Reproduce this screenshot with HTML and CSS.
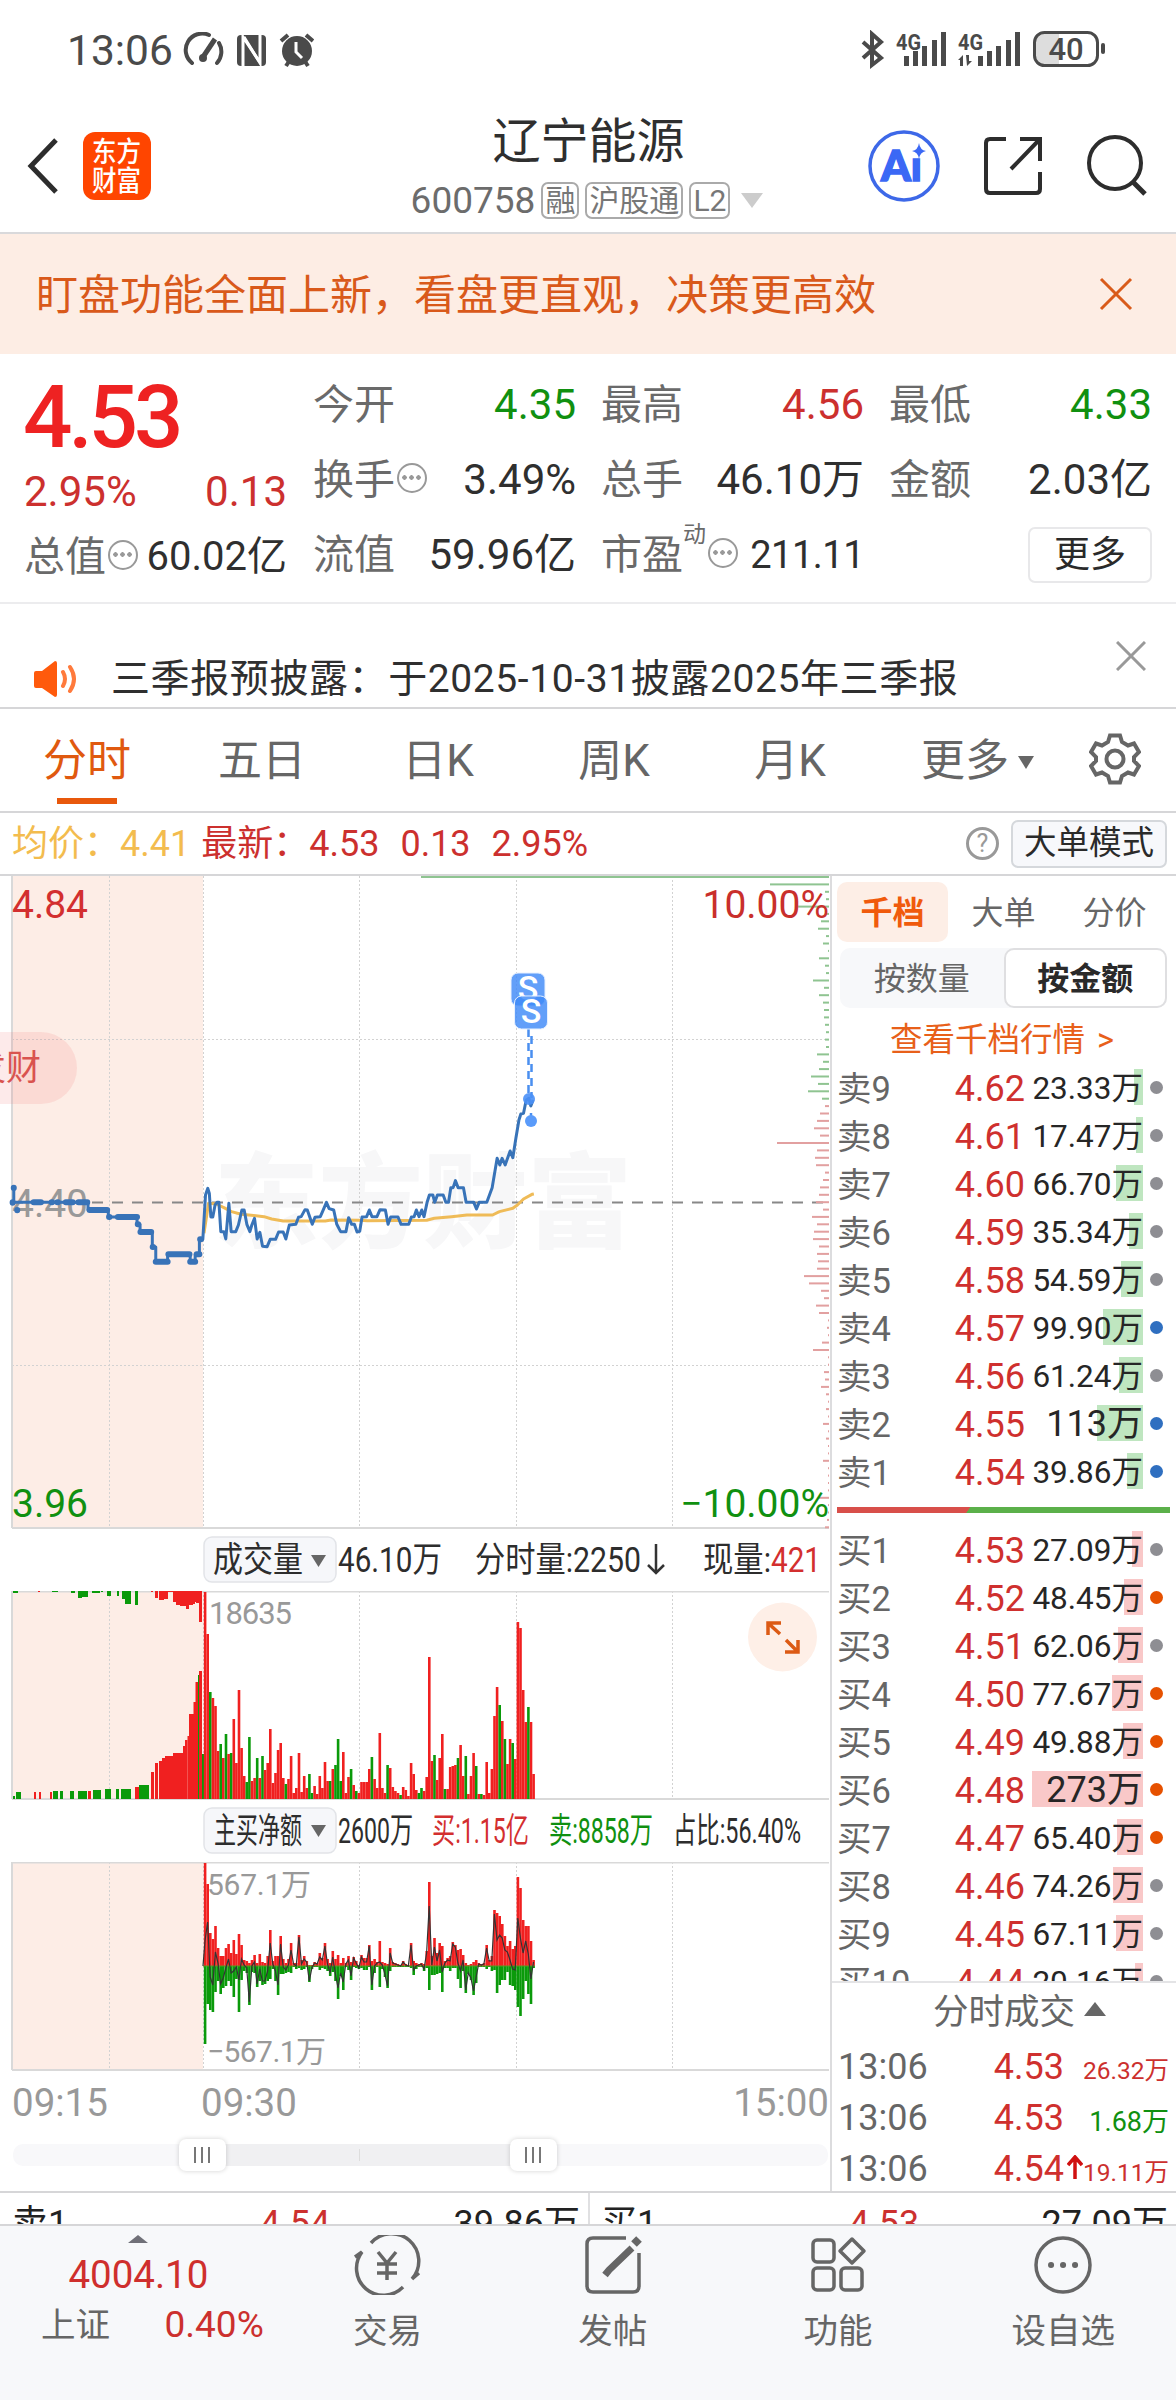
FILE: index.html
```html
<!DOCTYPE html>
<html lang="zh-CN">
<head>
    <meta charset="UTF-8">
    <title>辽宁能源 600758</title>
    <link rel="stylesheet" href="styles.css">
</head>
<body>
    <div class="statusbar">
        <span class="clock">13:06</span>
        <svg class="st-left" width="132" height="36" viewBox="0 0 132 36" fill="none" stroke="#4a4a4a" stroke-width="4">
            <path d="M10 31A16.500 16.500 0 0 1 27 3M37 11A17 17 0 0 1 35 31" stroke-linecap="round"/>
            <path d="M21 25L33 7" stroke-width="5"/>
            <circle cx="21" cy="26" r="4" fill="#4a4a4a" stroke="none"/>
            <rect x="55" y="3" width="29" height="31" rx="4" fill="#4a4a4a" stroke="none"/>
            <path d="M61 34V5L77 29" stroke="#fff" stroke-width="3"/>
            <path d="M62 5L78 31V3" stroke="#fff" stroke-width="3"/>
            <circle cx="115" cy="19" r="15" fill="#4a4a4a" stroke="none"/>
            <path d="M99 9L106 3M131 9L124 3M104 34L108 28M126 34L122 28"/>
            <path d="M114 10V20L120 26" stroke="#fff" stroke-width="3"/>
        </svg>
        <svg class="st-right" width="248" height="40" viewBox="0 0 248 40">
            <path d="M4 12L22 28L13 35V4L22 12L4 28" fill="none" stroke="#4a4a4a" stroke-width="4"/>
            <g fill="#4a4a4a">
                <text x="37" y="20" font-size="22" font-weight="700" textLength="25" lengthAdjust="spacingAndGlyphs">4G</text>
                <text x="99" y="20" font-size="22" font-weight="700" textLength="25" lengthAdjust="spacingAndGlyphs">4G</text>
                <rect x="45" y="26" width="5" height="10"/><rect x="54" y="21" width="5" height="15"/><rect x="63" y="16" width="5" height="20"/><rect x="73" y="10" width="5" height="26"/><rect x="82" y="2" width="5" height="34"/>
                <rect x="119" y="26" width="5" height="10"/><rect x="128" y="21" width="5" height="15"/><rect x="137" y="16" width="5" height="20"/><rect x="147" y="10" width="5" height="26"/><rect x="156" y="2" width="5" height="34"/>
                <path d="M99 30L104 25V36H101V30zM107 25H110V31H113L108 36z"/>
                <rect x="242" y="13" width="4" height="11" rx="2"/>
            </g>
            <path d="M184 3H200V35H184Q176 35 176 26V12Q176 3 184 3z" fill="#ddd"/>
            <rect x="175.500" y="2.500" width="63" height="33" rx="10" fill="none" stroke="#4a4a4a" stroke-width="3"/>
            <text x="207" y="30" font-size="31" font-weight="500" text-anchor="middle" fill="#4a4a4a">40</text>
        </svg>
    </div>

    <header class="topbar">
        <svg class="back" width="34" height="58" viewBox="0 0 34 58"><path d="M30 3L5 29L30 55" fill="none" stroke="#2d2d2d" stroke-width="5"/></svg>
        <svg class="logo" width="68" height="68" viewBox="0 0 68 68">
            <rect width="68" height="68" rx="12" fill="#ff4500"/>
            <g fill="#fff" font-size="28" font-weight="500"><text x="9" y="30" textLength="49" lengthAdjust="spacingAndGlyphs">东方</text><text x="9" y="59" textLength="49" lengthAdjust="spacingAndGlyphs">财富</text></g>
        </svg>
        <div class="title">
            <h1>辽宁能源</h1>
            <div class="code">600758<i>融</i><i>沪股通</i><i>L2</i><b></b></div>
        </div>
        <svg class="tools" width="284" height="76" viewBox="0 0 284 76" fill="none" stroke="#2d2d2d" stroke-width="4">
            <circle cx="38" cy="38" r="34" stroke="#3d68e8" stroke-width="3.500"/>
            <text x="15" y="53" font-size="42" font-weight="900" fill="#3b68f5" stroke="#3b68f5" stroke-width="1.500" textLength="41" lengthAdjust="spacingAndGlyphs">Aı</text>
            <path d="M53 15Q54 22 60 23Q54 24 53 31Q52 24 46 23Q52 22 53 15z" fill="#3b68f5" stroke="none"/>
            <path d="M140 11H124Q120 11 120 15V61Q120 65 124 65H170Q174 65 174 61V44M154 11H174V33M174 11L145 41"/>
            <circle cx="249" cy="35" r="26"/>
            <path d="M267 54L279 66" stroke-width="5"/>
        </svg>
    </header>

    <div class="banner">
        <span>盯盘功能全面上新，看盘更直观，决策更高效</span>
        <svg width="34" height="34" viewBox="0 0 34 34"><path d="M2 2L32 32M32 2L2 32" stroke="#d95b1a" stroke-width="3"/></svg>
    </div>

    <section class="quote">
        <div class="now">
            <div class="price">4.53</div>
            <div class="pair red"><span>2.95%</span><span>0.13</span></div>
            <div class="pair cell"><label>总值<em class="more"></em></label><span class="tight">60.02亿</span></div>
        </div>
        <div class="cells">
            <div class="cell"><label>今开</label><span class="green">4.35</span></div>
            <div class="cell"><label>最高</label><span class="red">4.56</span></div>
            <div class="cell"><label>最低</label><span class="green">4.33</span></div>
            <div class="cell"><label>换手<em class="more"></em></label><span>3.49%</span></div>
            <div class="cell"><label>总手</label><span>46.10万</span></div>
            <div class="cell"><label>金额</label><span>2.03亿</span></div>
            <div class="cell"><label>流值</label><span>59.96亿</span></div>
            <div class="cell"><label>市盈<sup>动</sup><em class="more"></em></label><span class="pe">211.11</span></div>
            <div class="cell end"><button class="btn-more">更多</button></div>
        </div>
    </section>

    <div class="notice">
        <svg width="46" height="38" viewBox="0 0 46 38"><path d="M1 13Q1 11 3 11H9L22 1Q24 1 24 3V35Q24 37 22 37L9 28H3Q1 28 1 26z" fill="#ff5a0c"/><path d="M30 12Q34 19 30 26M37 7Q45 19 37 31" fill="none" stroke="#ff7a3c" stroke-width="4" stroke-linecap="round"/></svg>
        <p>三季报预披露：于2025-10-31披露2025年三季报</p>
        <svg class="x" width="30" height="30" viewBox="0 0 30 30"><path d="M1 1L29 29M29 1L1 29" stroke="#999" stroke-width="3"/></svg>
    </div>

    <nav class="tabs">
        <a class="active">分时</a><a>五日</a><a>日K</a><a>周K</a><a>月K</a><a class="drop">更多<b></b></a>
        <svg width="52" height="52" viewBox="0 0 52 52" fill="none" stroke="#666" stroke-width="4"><path d="M21 2.500H31L33 9L39 12.500L45 10.500L50 19L45 24V28L50 33L45 41.500L39 39.500L33 43L31 49.500H21L19 43L13 39.500L7 41.500L2 33L7 28V24L2 19L7 10.500L13 12.500L19 9z"/><circle cx="26" cy="26" r="8.500"/></svg>
    </nav>

    <div class="avg">
        <span class="yellow">均价：4.41</span>
        <span class="red latest">最新：4.53</span>
        <span class="red">0.13</span>
        <span class="red">2.95%</span>
        <i class="help">?</i>
        <button>大单模式</button>
    </div>

    <main class="main">
        <div class="charts">
            <svg class="chart" width="830" height="653" viewBox="0 0 830 653">
                <rect x="12" y="0" width="191" height="652" fill="#fdede6"/>
                <text x="214" y="364" class="mark" textLength="418" lengthAdjust="spacingAndGlyphs">东方财富</text>
                <g class="grid"><path d="M109.500 0V652M203.500 0V652M359.500 0V652M516.500 0V652M672.500 0V652M12 163.500H829M12 489.500H829"/></g>
                <path d="M12 0V652M12 652H829" class="frame"/>
                <path d="M12 326.500H829" stroke="#888" stroke-width="2" stroke-dasharray="11 9"/>
                <g id="depth"></g>
                <text x="12" y="341" font-size="39" fill="#999">4.40</text>
                <g transform="translate(0 184) scale(.3827 .3333)" fill="none" stroke-linejoin="round">
                    <polyline class="line avgline" points="533,520 545,430 565,432 585,443 605,455 630,463 650,465 690,470 710,477 740,483 850,483 865,480 940,481 960,482 1115,481 1135,475 1180,470 1220,465 1287,465 1305,455 1340,445 1352,435 1368,417 1390,403 1395,402"/>
                    <polyline class="line" points="36,383 36,427 230,427 230,449 283,449 283,471 358,471 358,493 366,493 366,515 398,515 398,561 407,561 407,605 438,605 438,583 497,583 497,605 510,605 510,583 521,583 521,538 530,538 537,405 543,385 547,400 551,471 556,471 562,435 567,427 572,427 577,515 585,515 590,537 598,430 604,515 616,515 623,495 632,450 638,450 645,493 653,515 658,495 665,475 672,537 679,517 686,559 698,560 706,538 720,538 728,516 740,516 747,537 756,495 773,493 780,472 787,470 797,449 803,450 816,493 823,472 837,470 845,449 853,427 860,446 872,450 880,493 890,515 904,515 911,473 919,493 926,493 933,516 940,514 946,471 958,470 965,450 972,470 985,470 993,449 1007,450 1014,493 1021,471 1040,471 1048,493 1068,493 1075,471 1082,470 1088,450 1095,470 1102,450 1108,470 1116,427 1122,405 1131,405 1136,427 1143,405 1158,405 1165,427 1172,427 1178,383 1184,383 1190,362 1197,383 1211,383 1218,427 1238,427 1245,447 1252,427 1272,427 1286,383 1299,295 1306,315 1312,295 1320,315 1333,273 1340,293 1348,235 1356,180 1361,162 1368,160 1375,120 1382,115 1387,138 1393,120"/>
                    <path class="line dots" d="M36 383v1M33 427v1M45 450v1M88 427H107M135 427h1M150 427h1M172 427H190M205 427H228M234 450H280M285 471h1M308 471H358M360 493h1M367 516H395M399 561h1M407 605H438M440 583H495M497 605H510M514 583h7M523 538h2"/>
                </g>
                <g stroke="#4a8ff0" stroke-width="2.500"><path d="M528.500 153V222" stroke-dasharray="8 6"/><path d="M531.500 160V222" stroke-dasharray="8 6"/><path d="M531 237V245"/></g>
                <circle cx="529" cy="223" r="6" fill="#4a90f7" opacity=".9"/><circle cx="531" cy="245" r="6" fill="#5a9bfa"/>
                <rect x="511" y="97" width="34" height="33" rx="7" class="sell"/><text x="528" y="124" class="s">S</text>
                <rect x="514.500" y="120" width="33" height="33" rx="7" class="sell"/><text x="531" y="147" class="s">S</text>
                <g font-size="39">
                    <text x="12" y="42" fill="#d32f2f">4.84</text><text x="829" y="42" text-anchor="end" fill="#c92f2c">10.00%</text>
                    <text x="12" y="641" fill="#109010">3.96</text><text x="829" y="641" fill="#109010" text-anchor="end">−10.00%</text>
                </g>
                <path d="M0 156H41A36 36 0 0 1 41 228H0z" fill="#f05a5a" opacity=".13"/>
                <text x="-29" y="204" font-size="35" fill="#d9534f">发财</text>
            </svg>
            <svg class="chart bar-head" width="830" height="62" viewBox="0 0 830 62">
                <rect x="204" y="8" width="132" height="45" rx="8" class="pill"/>
                <g font-size="35" fill="#2d2d2d">
                    <text x="213" y="43" textLength="90" lengthAdjust="spacingAndGlyphs">成交量</text>
                    <path d="M311 26H326L318.500 38z" fill="#666"/>
                    <text x="338" y="43" textLength="104" lengthAdjust="spacingAndGlyphs">46.10万</text>
                    <text x="475" y="43" textLength="166" lengthAdjust="spacingAndGlyphs">分时量:2250</text>
                    <path d="M656 15V44M648 36L656 44L664 36" fill="none" stroke="#333" stroke-width="2.500"/>
                    <text x="703" y="43" textLength="68" lengthAdjust="spacingAndGlyphs">现量:</text>
                    <text x="771" y="43" textLength="50" lengthAdjust="spacingAndGlyphs" fill="#d32f2f">421</text>
                </g>
            </svg>
            <svg class="chart" width="830" height="209" viewBox="0 0 830 209">
                <rect x="12" y="0" width="191" height="208" fill="#fdede6"/>
                <g class="grid"><path d="M109.500 0V208M203.500 0V208M359.500 0V208M516.500 0V208M672.500 0V208"/></g>
                <path d="M12 208V.5H829M12 208H829" class="frame"/>
                <g id="pre"></g>
                <g id="volume"></g>
                <text x="209" y="33" font-size="31" fill="#999" textLength="83">18635</text>
                <circle cx="782.500" cy="46" r="34.500" fill="#feefe7"/>
                <path d="M768 44V32H781M768 32L780 43M798 49V61H785M798 61L786 49" fill="none" stroke="#dc5a14" stroke-width="3.500"/>
            </svg>
            <svg class="chart bar-head" width="830" height="62" viewBox="0 0 830 62">
                <rect x="204" y="8" width="132" height="45" rx="8" class="pill"/>
                <g font-size="35" fill="#2d2d2d">
                    <text x="214" y="43" textLength="88" lengthAdjust="spacingAndGlyphs">主买净额</text>
                    <path d="M311 25H326L318.500 37z" fill="#666"/>
                    <text x="338" y="43" textLength="75" lengthAdjust="spacingAndGlyphs">2600万</text>
                    <text x="432" y="43" textLength="97" lengthAdjust="spacingAndGlyphs" fill="#d32f2f">买:1.15亿</text>
                    <text x="549" y="43" textLength="104" lengthAdjust="spacingAndGlyphs" fill="#109010">卖:8858万</text>
                    <text x="673" y="43" textLength="128" lengthAdjust="spacingAndGlyphs">占比:56.40%</text>
                </g>
            </svg>
            <svg class="chart" width="830" height="209" viewBox="0 0 830 209">
                <rect x="12" y="0" width="191" height="208" fill="#fdede6"/>
                <g class="grid"><path d="M109.500 0V208M203.500 0V208M359.500 0V208M516.500 0V208M672.500 0V208"/></g>
                <path d="M12 208V.5H829M12 208H829" class="frame"/>
                <g id="net"></g>
                <g font-size="30" fill="#999"><text x="207" y="33" textLength="104">567.1万</text><text x="207" y="200" textLength="119">−567.1万</text></g>
            </svg>
            <div class="times"><span>09:15</span><span>09:30</span><span>15:00</span></div>
            <div class="slider">
                <div class="range"></div>
                <i class="knob k1"></i><i class="knob k2"></i>
            </div>
        </div>

        <aside class="book">
            <div class="book-tabs"><a class="active">千档</a><a>大单</a><a>分价</a></div>
            <div class="seg"><a>按数量</a><a class="active">按金额</a></div>
            <div class="link">查看千档行情 &gt;</div>
            <div id="asks"></div>
            <div class="ratio"></div>
            <div id="bids" class="bids"></div>
            <div class="deal-head">分时成交<b></b></div>
            <div class="deal"><span>13:06</span><span class="p">4.53</span><span class="a red">26.32万</span></div>
            <div class="deal"><span>13:06</span><span class="p">4.53</span><span class="a big green">1.68万</span></div>
            <div class="deal"><span>13:06</span><span class="p">4.54</span><svg width="16" height="24" viewBox="0 0 16 24"><path d="M8 24V3M1 10L8 2L15 10" fill="none" stroke="#d01010" stroke-width="3.500"/></svg><span class="a red">19.11万</span></div>
        </aside>
    </main>

    <div class="level1">
        <div><span>卖1</span><span class="red p">4.54</span><span class="a">39.86万</span></div>
        <div><span>买1</span><span class="red p">4.53</span><span class="a">27.09万</span></div>
    </div>

    <footer class="bottom">
        <div class="index"><b></b><strong>4004.10</strong><p><span>上证</span><span class="red">0.40%</span></p></div>
        <a><svg width="68" height="60" viewBox="0 0 68 60"><path d="M18 8A27 27 0 0 1 59 44L66 38M50 52A27 27 0 0 1 9 17L2 22"/><path d="M25 17L34 28L43 17M34 28V45M24 29H44M24 38H44"/></svg>交易</a>
        <a><svg width="68" height="60" viewBox="0 0 68 60"><path d="M47 3H14Q8 3 8 9V51Q8 57 14 57H54Q60 57 60 51V18"/><path d="M60 4L55 9" stroke-width="8"/><path d="M53 13L30 35L26 40" stroke-width="7"/></svg>发帖</a>
        <a><svg width="68" height="60" viewBox="0 0 68 60"><rect x="9" y="5" width="21" height="22" rx="4"/><rect x="9" y="33" width="21" height="22" rx="4"/><rect x="37" y="33" width="21" height="22" rx="4"/><path d="M48 4L60 16L48 28L36 16z" stroke-linejoin="round"/></svg>功能</a>
        <a><svg width="68" height="60" viewBox="0 0 68 60"><circle cx="34" cy="30" r="27"/><path d="M22 30h.1M34 30h.1M46 30h.1" stroke-width="6" stroke-linecap="round"/></svg>设自选</a>
    </footer>
    <script src="chart.js"></script>
</body>
</html>
```
FILE: styles.css
```css
* {
    box-sizing: border-box;
}

body {
    margin: 0;
    width: 1176px;
    height: 2400px;
    overflow: hidden;
    background: #fff;
    color: #2f2f2f;
    font-family: Roboto, "Noto Sans CJK SC", sans-serif;
}

h1, p {
    margin: 0;
    font-weight: 400;
}

i, em {
    font-style: normal;
}

svg {
    display: block;
    flex: none;
}

button {
    font-family: inherit;
    padding: 0;
    color: #2a2a2a;
}

.red {
    color: #cc302e;
}

.green {
    color: #109010;
}

.yellow {
    color: #f3bc4e;
}

.statusbar {
    height: 100px;
    display: flex;
    align-items: center;
    padding-left: 67px;
    color: #4a4a4a;
}

.clock {
    font-size: 42.5px;
    width: 115px;
}

.st-right {
    margin-left: 545px;
}

.topbar {
    height: 134px;
    display: flex;
    align-items: center;
    border-bottom: 2px solid #d9d9db;
    padding-left: 26px;
}

.logo {
    margin-left: 23px;
}

.title {
    width: 347px;
    margin-left: 264px;
    padding-top: 6px;
    text-align: center;
    white-space: nowrap;
}

.title h1 {
    font-size: 48px;
    line-height: 62px;
}

.code {
    display: flex;
    justify-content: center;
    align-items: center;
    height: 54px;
    padding-right: 3px;
    font-size: 37px;
    color: #6c6c6c;
}

.code i {
    height: 37px;
    line-height: 33px;
    padding: 0 2px;
    margin-left: 6px;
    border: 2px solid #aaa;
    border-radius: 7px;
    font-size: 30px;
    color: #777;
}

.code b {
    border: 11px solid transparent;
    border-top: 15px solid #ccc;
    border-bottom: 0;
    margin-left: 11px;
}

.tools {
    margin-left: 104px;
    font-family: Lato;
}

.banner {
    height: 120px;
    display: flex;
    align-items: center;
    justify-content: space-between;
    padding: 0 43px 0 36px;
    background: #fdede4;
    color: #d9591a;
    font-size: 42px;
}

.banner span {
    padding-bottom: 5px;
}

.quote {
    height: 250px;
    display: flex;
    padding: 14px 24px 0 24px;
    border-bottom: 2px solid #ececee;
    font-size: 42px;
}

.now {
    width: 263px;
    margin-right: 26px;
}

.price {
    height: 96px;
    line-height: 99px;
    font-size: 87px;
    font-weight: 500;
    letter-spacing: -4px;
    color: #ee2222;
    margin-left: -1px;
}

.pair {
    display: flex;
    justify-content: space-between;
    line-height: 56px;
}

.pair.cell {
    margin-top: 3px;
    height: 68px;
    line-height: 64px;
}

.tight {
    font-size: 40px;
}

.cells {
    display: grid;
    grid-template-columns: 263px 263px 263px;
    grid-auto-rows: 75px;
    column-gap: 25px;
}

.cell {
    display: flex;
    justify-content: space-between;
    align-items: center;
    line-height: 70px;
    white-space: nowrap;
}

.cells .cell {
    height: 74px;
}

.cell label {
    display: flex;
    align-items: center;
    height: 66px;
    font-size: 41px;
    color: #6a6a6a;
}

.cell sup {
    align-self: flex-start;
    font-size: 23px;
    line-height: 26px;
}

.pe {
    font-size: 38px;
    letter-spacing: -.5px;
}

.end {
    justify-content: flex-end;
}

/* round "more" mark next to a label */
.more {
    width: 30px;
    height: 30px;
    margin-left: 2px;
    margin-top: -4px;
    border: 2.5px solid #999;
    border-radius: 50%;
    background: radial-gradient(circle, #999 2px, transparent 2.5px) 0 0 / 7px 25px repeat-x content-box;
    padding: 0 2px;
}

.btn-more {
    width: 124px;
    height: 56px;
    border: 2px solid #e8e8ea;
    border-radius: 7px;
    background: #fff;
    font-size: 36px;
    line-height: 48px;
}

.notice {
    height: 105px;
    display: flex;
    align-items: flex-start;
    padding: 56px 30px 0 33px;
    border-bottom: 2px solid #d6d6d8;
}

.notice p {
    margin-left: 32px;
    font-size: 39px;
    line-height: 39px;
    letter-spacing: .6px;
    white-space: nowrap;
}

.notice .x {
    margin-left: auto;
    margin-top: -19px;
}

.tabs {
    height: 104px;
    display: flex;
    align-items: center;
    border-bottom: 2px solid #d6d6d8;
    color: #666;
    font-size: 44px;
    line-height: 105px;
}

.tabs a {
    width: 176px;
    height: 102px;
    text-align: center;
}

.tabs a:first-child {
    width: 174px;
}

.tabs .drop.drop {
    width: 156px;
    text-align: right;
}

.tabs .active {
    color: #e0590f;
    background: linear-gradient(#e8580c, #e8580c) 57px 89px / 60px 6px no-repeat;
}

.tabs .drop b {
    display: inline-block;
    margin: 0 0 7px 9px;
    border: 8px solid transparent;
    border-top: 13px solid #666;
    border-bottom: 0;
}

.tabs svg {
    margin: -2px 0 0 55px;
}

.avg {
    height: 63px;
    display: flex;
    align-items: center;
    border-bottom: 2px solid #d6d6d8;
    font-size: 36px;
    line-height: 58px;
    padding: 0 9px 0 12px;
    white-space: nowrap;
}

.avg span {
    margin-right: 21px;
}

.avg .yellow {
    margin-right: 11px;
}

.help {
    width: 33px;
    height: 33px;
    margin-left: auto;
    margin-right: 12px;
    border: 3px solid #999;
    border-radius: 50%;
    font-size: 25px;
    line-height: 27px;
    text-align: center;
    color: #999;
}

.avg button {
    width: 156px;
    height: 48px;
    border: 2px solid #d5d8dc;
    border-radius: 7px;
    background: #f7f8fb;
    font-size: 32.5px;
    line-height: 43px;
}

.main {
    display: flex;
    height: 1317px;
    border-bottom: 2px solid #d6d6d8;
}

.charts {
    width: 830px;
}

.chart {
    font-family: Roboto, "Noto Sans CJK SC", sans-serif;
}

.grid {
    stroke: #d2d2d2;
    stroke-width: 1;
    stroke-dasharray: 2 2;
    fill: none;
}

.frame {
    stroke: #d9d9d9;
    stroke-width: 2;
    fill: none;
}

.mark {
    font-size: 103px;
    font-weight: 900;
    fill: #f7f7f8;
}

.line {
    stroke: #3873b8;
    stroke-width: 3;
    vector-effect: non-scaling-stroke;
}

.avgline {
    stroke: #efbb57;
}

.dots {
    stroke-width: 6;
    stroke-linecap: round;
}

.sell {
    fill: #3f8af8;
    fill-opacity: .82;
    stroke: #e6f0ff;
    stroke-width: 1;
}

.s {
    font-size: 34px;
    font-weight: 500;
    fill: #fff;
    text-anchor: middle;
}

.pill {
    fill: #f6f7fa;
    stroke: #e2e4e8;
    stroke-width: 1.5;
}

.times {
    display: flex;
    height: 62px;
    line-height: 64px;
    padding: 0 1px 0 12px;
    font-size: 38.5px;
    color: #999;
}

.times span {
    width: 189px;
}

.times span:last-child {
    width: auto;
    margin-left: auto;
}

.slider {
    position: relative;
    height: 22px;
    margin: 11px 2px 0 13px;
    border-radius: 10px;
    background: #f8f8fa;
}

.range {
    height: 22px;
    margin-left: 190px;
    width: 330px;
    background: linear-gradient(#ddd, #ddd) 156px 5px / 1px 12px no-repeat #f0f0f2;
}

.knob {
    position: absolute;
    top: -5px;
    width: 47px;
    height: 32px;
    border-radius: 7px;
    background: repeating-linear-gradient(90deg, #777 0 2px, transparent 2px 7px) 15px 8px / 16px 16px no-repeat #fff;
    box-shadow: 0 0 5px rgba(0, 0, 0, .18);
}

.k1 {
    left: 166px;
}

.k2 {
    left: 497px;
}

.book {
    width: 346px;
    border-left: 2px solid #dcdcde;
    color: #666;
}

.book-tabs {
    display: flex;
    align-items: center;
    padding: 6px 5px;
    height: 72px;
    font-size: 32px;
    line-height: 62px;
}

.book-tabs a {
    width: 111px;
    height: 60px;
    border-radius: 10px;
    text-align: center;
}

.book-tabs .active {
    background: #fdeee6;
    color: #f05a0c;
    font-weight: 700;
}

.seg {
    display: flex;
    width: 327px;
    height: 60px;
    margin-left: 8px;
    border-radius: 10px;
    background: #f7f8fa;
    font-size: 32px;
    line-height: 62px;
    text-align: center;
}

.seg a {
    width: 164px;
}

.seg .active {
    border: 2px solid #dfdfe1;
    border-radius: 10px;
    background: #fff;
    color: #2a2a2a;
    font-weight: 700;
    line-height: 58px;
}

.link {
    height: 55px;
    line-height: 64px;
    padding-left: 58px;
    font-size: 32.5px;
    color: #e8601a;
    word-spacing: 4px;
    white-space: pre;
}

.row {
    display: flex;
    align-items: center;
    height: 48px;
    line-height: 49px;
    padding-left: 5px;
    font-size: 34.5px;
}

.row .n {
    width: 96px;
    height: 45px;
    white-space: nowrap;
}

.row .p {
    width: 92px;
    height: 45px;
    text-align: right;
    font-size: 36px;
    color: #cf302e;
}

.row .v {
    width: 118px;
    height: 36px;
    line-height: 39px;
    text-align: right;
    font-size: 31.5px;
    color: #262626;
    background: linear-gradient(#bfe6c0, #bfe6c0) right / 0 100% no-repeat;
}

.row .v.big {
    font-size: 36px;
}

.bids .v {
    background-image: linear-gradient(#f9c8c8, #f9c8c8);
}

.row .d {
    width: 13px;
    height: 13px;
    margin-left: 7px;
    border-radius: 50%;
    background: #8e8e93;
}

.row .blue {
    background: #2f6fc0;
}

.row .orange {
    background: #e65100;
}

.ratio {
    height: 6px;
    width: 333px;
    margin: 12px 0 12px 5px;
    background: linear-gradient(125deg, #d84f4a 0 109px, #5bb04a 109.5px);
}

.bids {
    height: 458px;
    overflow: hidden;
    border-bottom: 2px solid #e4e4e6;
}

.deal-head {
    display: flex;
    align-items: center;
    height: 57px;
    padding-left: 101px;
    font-size: 35.5px;
    line-height: 54px;
}

.deal-head b {
    margin-left: 9px;
    margin-top: -6px;
    border: 11px solid transparent;
    border-bottom: 14px solid #666;
    border-top: 0;
}

.deal {
    display: flex;
    align-items: center;
    height: 51px;
    padding: 2px 7px 0 6px;
    font-size: 36px;
}

.deal .p {
    width: 138px;
    color: #cf302e;
    text-align: right;
}

.deal span:first-child {
    width: 88px;
}

.deal .a {
    margin-left: auto;
    font-size: 24.5px;
    padding-top: 4px;
}

.deal svg {
    margin: -4px -9px 0 3px;
}

.deal .big {
    font-size: 27px;
}

.level1 {
    display: flex;
    height: 31px;
    overflow: hidden;
    font-size: 36px;
    line-height: 62px;
    color: #222;
}

.level1 div {
    display: flex;
    width: 588px;
    height: 31px;
    padding: 0 8px 0 12px;
}

.level1 div + div {
    border-left: 2px solid #e0e0e2;
    padding-left: 11px;
}

.level1 .p {
    width: 262px;
    text-align: right;
}

.level1 .a {
    margin-left: auto;
}

.bottom {
    display: flex;
    height: 177px;
    padding-top: 9px;
    border-top: 2px solid #d6d6d8;
    background: #f7f8fa;
    color: #666;
    font-size: 34.5px;
}

.index {
    width: 275px;
    text-align: center;
}

.index b {
    display: block;
    width: 20px;
    margin: 0 0 0 128px;
    border: 10px solid transparent;
    border-bottom: 8px solid #707078;
    border-top: 0;
}

.index strong {
    display: block;
    height: 62px;
    padding-left: 2px;
    line-height: 64px;
    font-size: 38.5px;
    font-weight: 400;
    color: #cf2f2d;
}

.index p {
    display: flex;
    justify-content: space-between;
    padding: 0 11px 0 41px;
    line-height: 40px;
}

.index .red {
    font-size: 37px;
}

.bottom a {
    width: 225.5px;
    text-align: center;
    line-height: 72px;
}

.bottom a svg {
    margin: 0 auto;
    fill: none;
    stroke: #666;
    stroke-width: 3.5;
}
```
FILE: chart.js
```js
var RED = "#f02020";
var GREEN = "#0a9a0a";
var START = 205;
var STEP = 2.607;

function bar(x, y, w, h, color) {
    return '<rect x="' + x.toFixed(1) + '" y="' + y.toFixed(1) + '" width="' + w + '" height="' + h + '" fill="' + color + '"/>';
}

// turnover at each price level, drawn from the right edge
var depth = [408, 59, 4, 3, 31, 4, 8, 11, 3, 6, 1, 10, 4, 3, 16, 5, 10, 6, 5, 5, 4, 3, 4, 3, 12, 6, 10, 18, 11, 21, 7,
    4, 9, 12, 15, 9, 52, 12, 14, 13, 4, 6, 9, 10, 13, 6, 17, 12, 15, 16, 10, 12, 11, 12, 25, 20, 8, 5, 13, 10, 1, 2, 1,
    7, 16, 1, 1, 5, 4, 8, 3, 1, 3, 1, 6, 1, 3, 1, 1, 6, 1, 1, 1, 1, 10, 1, 1, 2, 4];
document.getElementById("depth").innerHTML = depth.map(function (w, i) {
    return bar(829 - w, i * 7.39, w, 2, i < 31 ? "#8fc491" : "#e2a0a0");
}).join("");

var volume = "207r 165r 107g 101r 93r 48r 55g 41r 65g 45r 46g 80r 36r 109r 51r 23r 17g 62g 18r 21r 41g 21r 43g 29r 36r 70r 16r 26r 49r 56r 21r 15g 20r 43r 6r 11r 46r 7r 23r 11r 25g 6g 13r 5r 23r 11r 37r 18r 18g 30r 34g 60g 18g 47r 6r 22r 30g 14r 8g 6r 17r 17r 17r 30r 42g 20r 11r 66r 11r 6r 34g 31r 12r 8r 6r 4g 12r 9r 3r 36r 25r 9r 6g 11g 8r 22r 142r 38r 44g 19r 41r 65r 10g 10r 32r 33r 34r 41g 54r 23r 43g 5r 23r 46r 33g 5r 5g 4r 37r 6r 30r 83r 112r 94g 78r 60g 35r 60r 56g 40r 177r 171r 109r 77r 92g 77r 25r".split(" ");
document.getElementById("volume").innerHTML = volume.map(function (v, i) {
    var h = parseInt(v);
    return bar(START - 1.2 + i * STEP, 208 - h, 2.6, h, v.slice(-1) == "r" ? RED : GREEN);
}).join("");

// call auction: matched below, unmatched hanging from the top
var pre = [[13, 2, 3, 0], [16, 5, 7, 0], [34, 2, 7, 1], [39, 2, 7, 1], [50, 2, 7, 1], [53, 5, 8, 0], [60, 3, 8, 0],
    [70, 4, 8, 0], [78, 9, 8, 0], [88, 3, 8, 1], [93, 8, 9, 0], [105, 6, 10, 0], [116, 3, 10, 0], [121, 10, 10, 0],
    [135, 4, 12, 1], [139, 10, 14, 0], [151, 3, 27, 1], [155, 3, 36, 1], [159, 3, 38, 1], [162, 3, 41, 1],
    [165, 8, 43, 1], [173, 10, 46, 1], [183, 2.5, 53, 1], [185, 2.5, 59, 1], [187.5, 2, 63, 1], [189, 5, 85, 1],
    [193.5, 2.5, 97, 1], [195.5, 3, 117, 1], [198, 1.5, 124, 0], [199, 3, 128, 1], [202, 2, 45, 0]];
var hang = [[13, 5, 2, 0], [38, 2, 1, 1], [52, 6, 1, 0], [71, 4, 2, 0], [78, 4, 7, 0], [82, 6, 6, 0], [92, 8, 2, 0],
    [101, 2, 1, 0], [107, 4, 5, 0], [117, 2, 5, 0], [122, 3, 8, 0], [125, 6, 13, 0], [135, 3, 14, 0],
    [151, 2, 1, 1], [155, 3, 7, 1], [159, 5, 9, 1], [164, 4, 8, 1], [168, 5, 1, 1], [173, 4, 11, 1], [176, 4, 14, 1],
    [180, 6, 15, 1], [186, 3, 18, 1], [188, 5, 14, 1], [192, 3, 13, 1], [194, 3, 11, 1], [196, 6, 12, 1], [199, 3, 31, 1]];
document.getElementById("pre").innerHTML = pre.map(function (b) {
    return bar(b[0], 208 - b[2], b[1], b[2], b[3] ? RED : GREEN);
}).join("") + hang.map(function (b) {
    return bar(b[0], 0, b[1], b[2], b[3] ? RED : GREEN);
}).join("");

// [buy, sell] per minute
var net = [[103, 78], [82, 38], [33, 44], [27, 46], [40, 26], [18, 15], [10, 28], [10, 22], [18, 20], [22, 15], [13, 20],
    [26, 31], [12, 13], [32, 46], [21, 14], [6, 5], [5, 7], [3, 39], [6, 6], [11, 7], [3, 21], [12, 15], [4, 19], [3, 18],
    [10, 15], [36, 13], [5, 3], [10, 15], [10, 29], [30, 8], [7, 8], [3, 7], [7, 6], [23, 7], [3, 1], [3, 3], [31, 2],
    [6, 4], [10, 3], [5, 1], [1, 16], [1, 3], [4, 1], [3, 1], [13, 4], [8, 2], [23, 3], [7, 5], [3, 10], [15, 6], [7, 15],
    [11, 33], [3, 10], [8, 24], [3, 1], [10, 4], [4, 14], [9, 1], [5, 2], [1, 3], [11, 2], [8, 4], [8, 4], [21, 1],
    [5, 24], [7, 7], [4, 1], [25, 21], [4, 3], [3, 11], [2, 22], [18, 5], [4, 1], [3, 1], [2, 1], [1, 1], [5, 1], [2, 1],
    [1, 1], [23, 2], [5, 9], [3, 3], [2, 1], [3, 1], [2, 5], [15, 2], [84, 24], [10, 9], [28, 9], [13, 8], [23, 7],
    [20, 26], [5, 2], [8, 2], [10, 5], [24, 2], [21, 2], [16, 13], [17, 22], [11, 5], [3, 27], [1, 8], [2, 14], [4, 29],
    [6, 17], [3, 1], [2, 1], [3, 1], [21, 3], [6, 1], [10, 5], [56, 4], [53, 27], [50, 19], [42, 14], [30, 14], [20, 6],
    [25, 19], [17, 20], [20, 24], [89, 41], [78, 50], [46, 33], [40, 15], [40, 28], [25, 38], [6, 2]];
var line = "203,104";
document.getElementById("net").innerHTML = net.map(function (n, i) {
    var x = START + i * STEP;
    line += " " + x.toFixed(1) + "," + (104 - n[0] + n[1]);
    return bar(x - 1.2, 104 - n[0], 2.6, n[0], RED) + bar(x - 1.2, 104, 2.6, n[1], GREEN);
}).join("") + bar(203, 103.5, 332, 1, "#5a9a20") +
    '<polyline points="' + line + '" fill="none" stroke="#333" stroke-width="1.2"/>';

// label, price, amount, bar width, dot
var asks = [["卖9", "4.62", "23.33万", 9, ""], ["卖8", "4.61", "17.47万", 7, ""], ["卖7", "4.60", "66.70万", 27, ""],
    ["卖6", "4.59", "35.34万", 14, ""], ["卖5", "4.58", "54.59万", 22, ""], ["卖4", "4.57", "99.90万", 40, "blue"],
    ["卖3", "4.56", "61.24万", 24, ""], ["卖2", "4.55", "113万", 46, "blue"], ["卖1", "4.54", "39.86万", 16, "blue"]];
var bids = [["买1", "4.53", "27.09万", 11, ""], ["买2", "4.52", "48.45万", 19, "orange"], ["买3", "4.51", "62.06万", 25, ""],
    ["买4", "4.50", "77.67万", 31, "orange"], ["买5", "4.49", "49.88万", 20, "orange"], ["买6", "4.48", "273万", 111, "orange"],
    ["买7", "4.47", "65.40万", 26, "orange"], ["买8", "4.46", "74.26万", 30, ""], ["买9", "4.45", "67.11万", 27, ""],
    ["买10", "4.44", "20.16万", 8, ""]];
function rows(list) {
    return list.map(function (r) {
        return '<div class="row"><span class="n">' + r[0] + '</span><span class="p">' + r[1] + '</span>' +
            '<span class="v' + (r[2].length < 5 ? ' big' : '') + '" style="background-size:' + r[3] + 'px 100%">' + r[2] +
            '</span><span class="d ' + r[4] + '"></span></div>';
    }).join("");
}
document.getElementById("asks").innerHTML = rows(asks);
document.getElementById("bids").innerHTML = rows(bids);
```
